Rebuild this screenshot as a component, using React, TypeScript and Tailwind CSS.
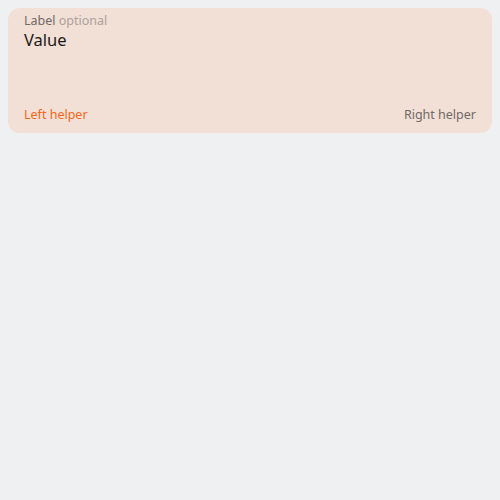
export default function App() {
  return (
    <div className="min-h-screen bg-[#eff0f2] p-2" style={{ fontFamily: '"Noto Sans", "Open Sans", sans-serif' }}>
      <div className="flex h-[125px] flex-col rounded-xl bg-[#f2dfd5] px-4 pt-[4px] pb-[10px]">
        <div className="text-[12.5px] leading-[17px]">
          <span className="text-[#6f6a68]">Label</span>{' '}
          <span className="text-[#aba39e]">optional</span>
        </div>
        <div className="text-[16.5px] leading-[22px] text-[#1c1a19]">Value</div>
        <div className="mt-auto flex justify-between text-[12.5px] leading-[16px]">
          <span className="text-[#f2661a]">Left helper</span>
          <span className="text-[#6f6a68]">Right helper</span>
        </div>
      </div>
    </div>
  );
}
